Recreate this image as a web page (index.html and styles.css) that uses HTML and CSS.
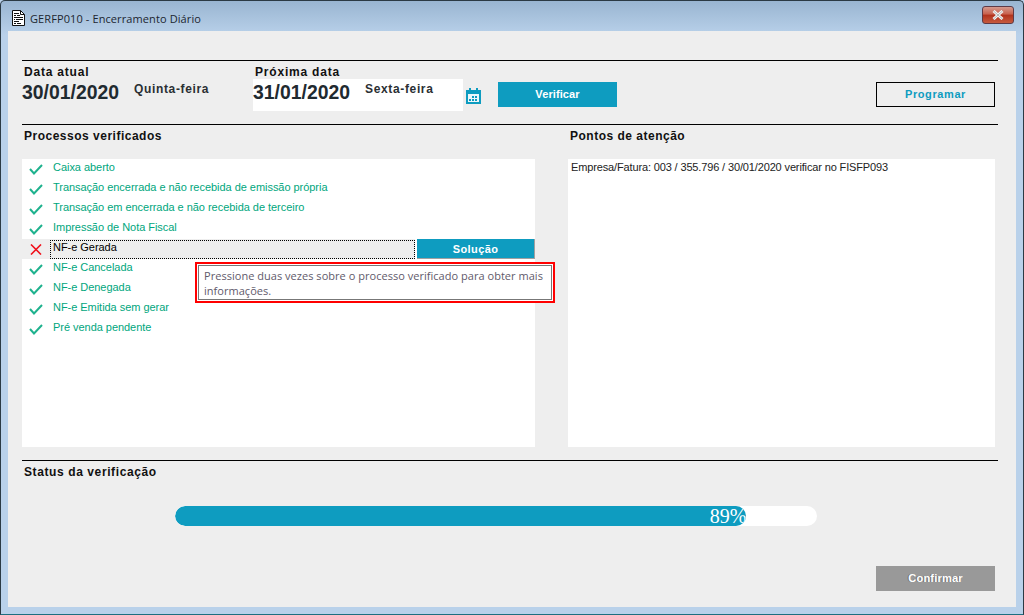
FILE: index.html
```html
<!DOCTYPE html>
<html lang="pt-BR">
<head>
    <meta charset="UTF-8">
    <title>GERFP010 - Encerramento Diário</title>
    <link rel="stylesheet" href="styles.css">
</head>
<body>
    <div class="window">
        <div class="titlebar">
            <svg class="doc-icon" width="13" height="16" viewBox="0 0 13 16">
                <path d="M.5 .5H8.5L12.5 4.5V15.5H.5Z" fill="#fff" stroke="#111"/>
                <path d="M8.5 .5V4.5H12.5" fill="none" stroke="#111"/>
                <path d="M2 3.5H7M2 5.5H4M5 5.5H8M2 7.5H11M2 9.5H3M4 9.5H11M2 11.5H7M2 13.5H4M5 13.5H9" stroke="#111"/>
            </svg>
            <span class="title">GERFP010 - Encerramento Diário</span>
            <div class="close">
                <svg width="14" height="10" viewBox="0 0 14 10">
                    <path d="M2.5 1L11.5 9M11.5 1L2.5 9" stroke="#f2f2f2" stroke-width="3"/>
                    <path d="M2.5 1L11.5 9M11.5 1L2.5 9" stroke="#777" stroke-width="1" opacity=".5"/>
                </svg>
            </div>
        </div>

        <div class="client">
            <div class="section top">
                <div class="date-block current">
                    <div class="label">Data atual</div>
                    <div class="date-line">
                        <span class="date">30/01/2020</span>
                        <span class="weekday">Quinta-feira</span>
                    </div>
                </div>
                <div class="date-block next">
                    <div class="label">Próxima data</div>
                    <div class="date-line date-box">
                        <span class="date">31/01/2020</span>
                        <span class="weekday">Sexta-feira</span>
                    </div>
                </div>
                <svg class="calendar" width="17" height="18" viewBox="0 0 17 18">
                    <path d="M1 3H16V17H1Z" fill="#0e9cc0"/>
                    <path d="M4 1H6V4H4ZM11 1H13V4H11Z" fill="#0e9cc0"/>
                    <path d="M3 7H14V15H3Z" fill="#eef7fa"/>
                    <path d="M7 9H9V11H7ZM10 9H12V11H10ZM4 12H6V14H4ZM7 12H9V14H7ZM10 12H12V14H10Z" fill="#0e9cc0"/>
                </svg>
                <div class="btn btn-primary">Verificar</div>
                <div class="btn btn-outline">Programar</div>
            </div>

            <div class="section middle">
                <div class="headings">
                    <h3 class="heading">Processos verificados</h3>
                    <h3 class="heading">Pontos de atenção</h3>
                </div>
                <div class="panels">
                    <div class="panel process-list">
                        <div class="row"><svg class="mark" viewBox="0 0 14 11"><path d="M1 5L5 9.5L13 1" /></svg><span>Caixa aberto</span></div>
                        <div class="row"><svg class="mark" viewBox="0 0 14 11"><path d="M1 5L5 9.5L13 1" /></svg><span>Transação encerrada e não recebida de emissão própria</span></div>
                        <div class="row"><svg class="mark" viewBox="0 0 14 11"><path d="M1 5L5 9.5L13 1" /></svg><span>Transação em encerrada e não recebida de terceiro</span></div>
                        <div class="row"><svg class="mark" viewBox="0 0 14 11"><path d="M1 5L5 9.5L13 1" /></svg><span>Impressão de Nota Fiscal</span></div>
                        <div class="row row-error">
                            <div class="row-selected">
                                <svg class="mark-x" viewBox="0 0 12 11"><path d="M1 .5L11 10.5M11 .5L1 10.5" /></svg>
                                <span class="focus-box">NF-e Gerada</span>
                            </div>
                            <div class="btn-solution">Solução</div>
                        </div>
                        <div class="row"><svg class="mark" viewBox="0 0 14 11"><path d="M1 5L5 9.5L13 1" /></svg><span>NF-e Cancelada</span></div>
                        <div class="row"><svg class="mark" viewBox="0 0 14 11"><path d="M1 5L5 9.5L13 1" /></svg><span>NF-e Denegada</span></div>
                        <div class="row"><svg class="mark" viewBox="0 0 14 11"><path d="M1 5L5 9.5L13 1" /></svg><span>NF-e Emitida sem gerar</span></div>
                        <div class="row"><svg class="mark" viewBox="0 0 14 11"><path d="M1 5L5 9.5L13 1" /></svg><span>Pré venda pendente</span></div>
                        <div class="tooltip">
                            <div class="tooltip-inner">Pressione duas vezes sobre o processo verificado para obter mais informações.</div>
                        </div>
                    </div>
                    <div class="panel notes">Empresa/Fatura: 003 / 355.796 / 30/01/2020 verificar no FISFP093</div>
                </div>
            </div>

            <div class="section status">
                <h3 class="heading">Status da verificação</h3>
                <div class="progress">
                    <div class="progress-fill" style="width: 89%">89%</div>
                </div>
                <div class="footer">
                    <div class="btn btn-disabled">Confirmar</div>
                </div>
            </div>
        </div>
    </div>
</body>
</html>
```

FILE: styles.css
```css
* {
    box-sizing: border-box;
}

body {
    margin: 0;
    font-family: "Liberation Sans", Arial, sans-serif;
    background-color: #b9d1ea;
}

.window {
    width: 1024px;
    height: 615px;
    display: flex;
    flex-direction: column;
    overflow: hidden;
    background: linear-gradient(#99b5d1 0, #b9d1ea 34px);
    border: 1px solid #2b3a44;
    border-bottom-color: #1d6f80;
    border-top-left-radius: 5px;
    border-top-right-radius: 5px;
}

.titlebar {
    height: 30px;
    flex: none;
    display: flex;
    align-items: center;
    padding: 5px 9px 0 11px;
}

.doc-icon {
    margin: -2px 5px 0 0;
}

.title {
    font-family: "Open Sans", sans-serif;
    font-size: 11px;
    letter-spacing: .1px;
    color: #1c2630;
}

.close {
    margin-left: auto;
    margin-top: -7px;
    width: 32px;
    height: 18px;
    display: flex;
    align-items: center;
    justify-content: center;
    border: 1px solid #5e3a46;
    border-radius: 3px;
    background: linear-gradient(#d49a8e 0, #c8604c 45%, #b1321c 50%, #c65a3e 100%);
}

.client {
    flex: 1;
    margin: 0 7px 7px;
    padding: 29px 18px 0 14px;
    background-color: #eeeeee;
    display: flex;
    flex-direction: column;
}

.section {
    border-top: 1px solid #000;
}

.top {
    height: 64px;
    flex: none;
    display: flex;
    align-items: flex-start;
}

.date-block.current {
    width: 231px;
    padding-top: 4px;
}

.date-block.next {
    width: 210px;
    padding-top: 4px;
}

.label,
.heading {
    margin: 0;
    font-size: 12px;
    font-weight: bold;
    letter-spacing: .5px;
    color: #111;
}

.label {
    padding-left: 2px;
    height: 14px;
    line-height: 14px;
    letter-spacing: .8px;
}

.date-line {
    display: flex;
    align-items: flex-start;
}

.date-box {
    height: 32px;
    background-color: #fff;
}

.date {
    width: 112px;
    padding-top: 1px;
    font-size: 19.4px;
    font-weight: bold;
    line-height: 24px;
    white-space: nowrap;
    color: #1f2a30;
}

.weekday {
    padding-top: 2px;
    font-size: 12px;
    font-weight: bold;
    letter-spacing: .65px;
    color: #2a2f33;
    line-height: 16px;
}

.calendar {
    margin: 26px 16px 0 2px;
}

.btn {
    width: 119px;
    height: 25px;
    margin-top: 21px;
    padding-bottom: 1px;
    display: flex;
    align-items: center;
    justify-content: center;
    font-size: 11px;
    font-weight: bold;
    letter-spacing: .1px;
}

.btn-primary {
    background-color: #0e9cc0;
    color: #fff;
}

.btn-outline {
    margin-left: auto;
    margin-right: 3px;
    border: 1px solid #000;
    letter-spacing: .6px;
    color: #0e9cc0;
}

.middle {
    height: 336px;
    flex: none;
    padding-top: 4px;
}

.headings {
    display: flex;
    height: 30px;
}

.headings .heading {
    width: 546px;
    flex: none;
    padding-left: 2px;
}

.panels {
    display: flex;
    gap: 33px;
}

.panel {
    height: 288px;
    background-color: #fff;
    font-size: 11px;
}

.process-list {
    position: relative;
    width: 513px;
    color: #00a67d;
    letter-spacing: -.04px;
}

.row {
    height: 20px;
    display: flex;
    align-items: center;
    padding-left: 7px;
}

.row span {
    position: relative;
    top: -2px;
}

.mark {
    width: 14px;
    height: 11px;
    margin: 1px 10px 0 0;
    flex: none;
    fill: none;
    stroke: #1fb28e;
    stroke-width: 2;
}

.row-error {
    padding-left: 0;
    color: #000;
}

.row-selected {
    width: 393px;
    height: 20px;
    display: flex;
    align-items: center;
    padding-left: 8px;
    background-color: #eeeeee;
}

.mark-x {
    width: 12px;
    height: 11px;
    margin: 0 8px 0 0;
    flex: none;
    fill: none;
    stroke: #f0101a;
    stroke-width: 1.6;
}

.focus-box {
    flex: 1;
    height: 19px;
    top: 0 !important;
    padding: 0 2px;
    line-height: 12px;
    border: 1px dotted #000;
}

.btn-solution {
    width: 118px;
    height: 20px;
    margin-left: 2px;
    display: flex;
    align-items: center;
    justify-content: center;
    font-size: 11px;
    font-weight: bold;
    letter-spacing: .4px;
    color: #fff;
    background-color: #0e9cc0;
    border-right: 1px solid #a0a0a0;
    border-bottom: 1px solid #a0a0a0;
}

.tooltip {
    position: absolute;
    left: 173px;
    top: 103px;
    width: 360px;
    height: 41px;
    padding: 1px;
    border: 2px solid #ff0000;
    background-color: #fff;
}

.tooltip-inner {
    height: 100%;
    padding: 2px 1px 2px 5px;
    border: 1px solid #777;
    font-family: "Open Sans", sans-serif;
    font-size: 11px;
    letter-spacing: .03px;
    line-height: 15px;
    color: #5f5a6b;
}

.notes {
    width: 427px;
    padding: 1px 3px;
    line-height: 15px;
    letter-spacing: -.14px;
    color: #222;
}

.status {
    flex: 1;
    padding-top: 4px;
    display: flex;
    flex-direction: column;
}

.status .heading {
    padding-left: 2px;
    line-height: 14px;
    letter-spacing: .6px;
}

.progress {
    width: 642px;
    height: 20px;
    margin: 27px 0 0 153px;
    background-color: #fff;
    border-radius: 10px;
    overflow: hidden;
}

.progress-fill {
    height: 20px;
    border-radius: 10px;
    overflow: hidden;
    background-color: #0e9cc0;
    color: #fff;
    font-family: "Liberation Serif", serif;
    font-size: 20px;
    line-height: 21px;
    text-align: right;
}

.footer {
    display: flex;
    justify-content: flex-end;
    padding-right: 3px;
}

.btn-disabled {
    margin-top: 40px;
    background-color: #999;
    color: #fff;
    letter-spacing: .2px;
    text-shadow: -1px 0 #6f6f6f;
}
```
